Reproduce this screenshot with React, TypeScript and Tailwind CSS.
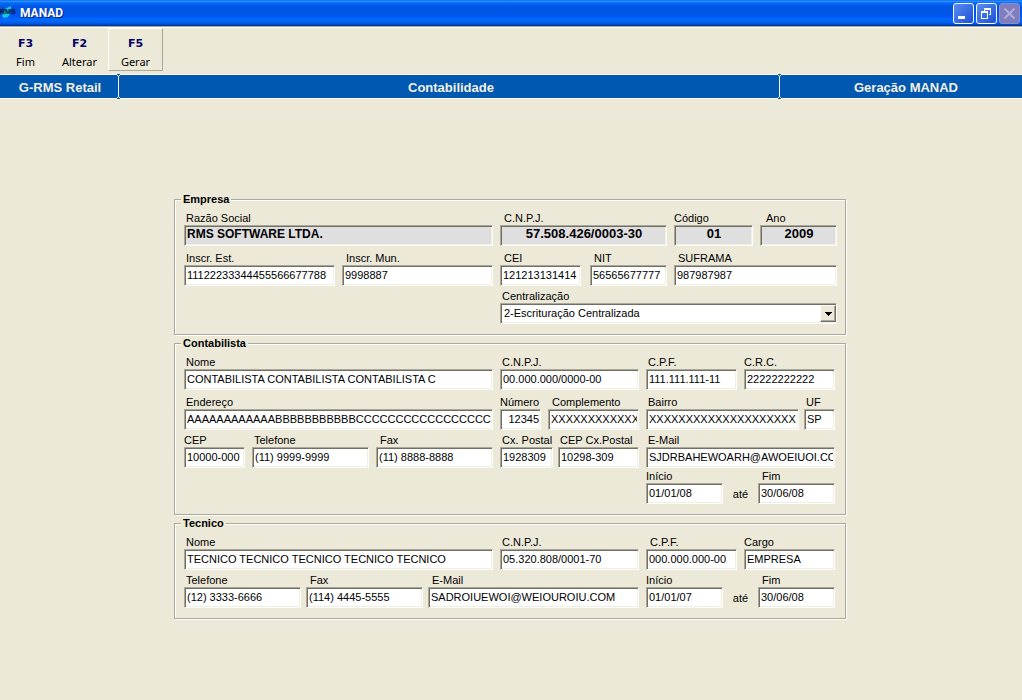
import { useId } from 'react'
import type { ReactNode } from 'react'

interface FieldProps {
    label: string
    value: string
    className: string
    labelClass?: string
    inputClass?: string
    locked?: boolean
}

const SUNKEN = 'border border-t-[#aca899] border-l-[#aca899] border-r-white border-b-white shadow-[inset_1px_1px_0_#716f64,inset_-1px_-1px_0_#f1efe2]'

function Field({ label, value, className, labelClass = 'pl-0.5', inputClass = 'text-[11px]', locked }: FieldProps) {
    const id = useId()
    return (
        <div className={`flex min-w-0 flex-col ${className}`}>
            <label htmlFor={id} className={`h-3.5 whitespace-nowrap text-[11px] leading-[14px] ${labelClass}`}>
                {label}
            </label>
            <input
                id={id}
                type="text"
                defaultValue={value}
                readOnly={locked}
                className={`h-[21px] w-full min-w-0 pr-px pl-0.5 outline-none ${SUNKEN} ${locked ? 'bg-[#e0dfe0] pb-1 font-bold' : 'bg-white pb-0.5'} ${inputClass}`}
            />
        </div>
    )
}

function Group({ title, className, children }: { title: string; className: string; children: ReactNode }) {
    return (
        <fieldset className={`min-w-0 border border-[#aca899] pb-[10px] pl-[9px] shadow-[inset_1px_1px_0_#fff,1px_1px_0_#fff] ${className}`}>
            <legend className="-ml-[3px] bg-[#ece9d8] px-0.5 text-[11px] leading-[14px] font-bold">{title}</legend>
            <div className="flex flex-col pt-[5px]">{children}</div>
        </fieldset>
    )
}

function Period({ start, end }: { start: string; end: string }) {
    return (
        <div className="flex min-w-0 flex-[189]">
            <Field label="Início" value={start} className="flex-[77]" labelClass="pl-0" />
            <span className="flex-[35] self-end pb-[3px] text-center text-[11px] leading-[14px]">até</span>
            <Field label="Fim" value={end} className="flex-[77]" labelClass="pl-1" />
        </div>
    )
}

function ToolButton({ keyName, label, className }: { keyName: string; label: string; className: string }) {
    return (
        <button type="button" className={`flex h-[43px] flex-col items-center border pt-2 ${className}`}>
            <span className="font-['DejaVu_Sans',sans-serif] text-[11px] leading-[14px] font-bold text-[#000066]">{keyName}</span>
            <span className="pt-[4px] font-['Noto_Sans',sans-serif] text-[11px] leading-[14px]">{label}</span>
        </button>
    )
}

function Divider() {
    return (
        <svg width="3" height="25" viewBox="0 0 3 25" shapeRendering="crispEdges" className="-mx-px -my-px shrink-0" aria-hidden="true">
            <path d="M0 0h3v25H0z" fill="#0058b0" />
            <path d="M0 1h1v1H0zM2 1h1v1H2zM1 2h1v21H1zM0 23h1v1H0zM2 23h1v1H2z" fill="#fff" />
        </svg>
    )
}

function TitleBar() {
    const frame = 'flex size-[21px] items-center justify-center rounded-[3px] border'
    return (
        <header className="flex h-[26px] items-center bg-[linear-gradient(180deg,#0058ee_0%,#3593ff_4%,#288eff_6%,#036ffc_10%,#0057e5_24%,#0054e3_40%,#0055eb_56%,#005bf5_66%,#026afe_76%,#0062ef_86%,#0052d6_92%,#0040ab_96%,#003092_100%)]">
            <svg width="16" height="16" viewBox="0 0 16 16" className="shrink-0" aria-hidden="true">
                <path d="M11 1L6 3 4 7l-2 4 2 2 4-1 2-3-1-3 2-2z" fill="#14c8e0" />
                <text x="0" y="9" fontSize="7" fontWeight="700" fill="#02122e">RMS</text>
            </svg>
            <h1 className="flex-1 pl-1 font-['Roboto',sans-serif] text-[12px] font-bold text-white [text-shadow:1px_1px_0_#00247a]">MANAD</h1>
            <div className="flex gap-0.5 pr-0.5">
                <button type="button" aria-label="Minimizar" className={`${frame} border-white bg-linear-to-br from-[#5a8cf0] to-[#1c4fd8]`}>
                    <svg width="19" height="19" viewBox="0 0 19 19" shapeRendering="crispEdges"><path d="M4 12h7v3H4z" fill="#fff" /></svg>
                </button>
                <button type="button" aria-label="Restaurar" className={`${frame} border-white bg-linear-to-br from-[#5a8cf0] to-[#1c4fd8]`}>
                    <svg width="19" height="19" viewBox="0 0 19 19" shapeRendering="crispEdges">
                        <path d="M7 4h7v7h-2v-1h1V6H8v1H7zM4 7h7v8H4zM5 9v5h5V9z" fill="#fff" fillRule="evenodd" />
                    </svg>
                </button>
                <button type="button" aria-label="Fechar" disabled className={`${frame} border-[#8c8ad0] bg-[#7f7dbb]`}>
                    <svg width="19" height="19" viewBox="0 0 19 19"><path d="M4.500 4.500l10 10M14.500 4.500l-10 10" stroke="#b0aedd" strokeWidth="2" /></svg>
                </button>
            </div>
        </header>
    )
}

export default function App() {
    const centralId = useId()
    return (
        <div className="min-h-screen bg-[#ece9d8] font-['Liberation_Sans',Arial,sans-serif] text-black">
            <TitleBar />
            <div className="flex h-12 border-t border-[#aca899] pt-px shadow-[inset_0_1px_0_#fff]">
                <ToolButton keyName="F3" label="Fim" className="w-[51px] border-transparent" />
                <ToolButton keyName="F2" label="Alterar" className="w-[57px] border-transparent" />
                <ToolButton keyName="F5" label="Gerar" className="w-[55px] border-t-white border-l-white border-r-[#aca899] border-b-[#aca899]" />
            </div>
            <div className="flex h-[25px] border-y border-white bg-[#0058b0] text-center text-[13px] leading-[25px] font-bold text-[#f4f0e0]">
                <div className="w-[118px] shrink-0 pl-0.5">G-RMS Retail</div>
                <Divider />
                <div className="flex-1 pl-1">Contabilidade</div>
                <Divider />
                <div className="w-[242px] shrink-0 pl-2.5">Geração MANAD</div>
            </div>

            <main className="pt-[93px] pr-0.5">
                <form className="mx-auto flex w-full max-w-[672px] flex-col gap-px">
                    <Group title="Empresa" className="pr-2">
                        <div className="flex gap-[7px]">
                            <Field label="Razão Social" value="RMS SOFTWARE LTDA." className="flex-[309]" inputClass="text-[12px]" locked />
                            <Field label="C.N.P.J." value="57.508.426/0003-30" className="flex-[167]" labelClass="pl-1" inputClass="text-center text-[13px]" locked />
                            <Field label="Código" value="01" className="flex-[79]" labelClass="pl-0" inputClass="text-center text-[13px]" locked />
                            <Field label="Ano" value="2009" className="flex-[77]" labelClass="pl-1.5" inputClass="text-center text-[13px]" locked />
                        </div>
                        <div className="flex gap-[7px] pt-[5px]">
                            <Field label="Inscr. Est." value="11122233344455566677788" className="flex-[151]" />
                            <Field label="Inscr. Mun." value="9998887" className="flex-[151]" labelClass="pl-1" />
                            <div className="flex min-w-0 flex-[167] gap-[9px]">
                                <Field label="CEI" value="121213131414" className="flex-[81]" labelClass="pl-1" />
                                <Field label="NIT" value="56565677777" className="flex-[77]" labelClass="pl-1" />
                            </div>
                            <Field label="SUFRAMA" value="987987987" className="flex-[163]" labelClass="pl-1" />
                        </div>
                        <div className="flex gap-[7px] pt-[3px]">
                            <div className="flex-[309]" />
                            <div className="flex min-w-0 flex-[337] flex-col">
                                <label htmlFor={centralId} className="h-3.5 pl-0.5 text-[11px] leading-[14px]">Centralização</label>
                                <div className="relative">
                                    <select id={centralId} className={`block h-[21px] w-full appearance-none bg-white px-[3px] text-[11px] outline-none ${SUNKEN}`}>
                                        <option>2-Escrituração Centralizada</option>
                                    </select>
                                    <span className="pointer-events-none absolute top-0.5 right-px flex h-[17px] w-4 items-center justify-center border border-t-white border-l-white border-r-[#716f64] border-b-[#716f64] bg-[#ece9d8] shadow-[inset_-1px_-1px_0_#aca899]">
                                        <svg width="7" height="4" viewBox="0 0 7 4" shapeRendering="crispEdges"><path d="M0 0h7v1H0zM1 1h5v1H1zM2 2h3v1H2zM3 3h1v1H3z" /></svg>
                                    </span>
                                </div>
                            </div>
                        </div>
                    </Group>

                    <Group title="Contabilista" className="pr-[10px]">
                        <div className="flex gap-[7px]">
                            <Field label="Nome" value="CONTABILISTA CONTABILISTA CONTABILISTA C" className="flex-[309]" />
                            <Field label="C.N.P.J." value="00.000.000/0000-00" className="flex-[139]" />
                            <Field label="C.P.F." value="111.111.111-11" className="flex-[91]" />
                            <Field label="C.R.C." value="22222222222" className="flex-[91]" labelClass="pl-0" />
                        </div>
                        <div className="flex gap-[7px] pt-[5px]">
                            <Field label="Endereço" value="AAAAAAAAAAAABBBBBBBBBBBCCCCCCCCCCCCCCCCC" className="flex-[309]" />
                            <Field label="Número" value="12345" className="flex-[41]" labelClass="pl-0" inputClass="text-right text-[11px]" />
                            <Field label="Complemento" value="XXXXXXXXXXXX" className="flex-[91]" labelClass="pl-1" />
                            <div className="flex min-w-0 flex-[189] gap-[5px]">
                                <Field label="Bairro" value="XXXXXXXXXXXXXXXXXXXX" className="flex-[153]" />
                                <Field label="UF" value="SP" className="flex-[31]" />
                            </div>
                        </div>
                        <div className="flex gap-[7px] pt-[3px]">
                            <Field label="CEP" value="10000-000" className="flex-[61]" labelClass="pl-0" />
                            <Field label="Telefone" value="(11) 9999-9999" className="flex-[117]" />
                            <Field label="Fax" value="(11) 8888-8888" className="flex-[117]" labelClass="pl-1" />
                            <div className="flex min-w-0 flex-[139] gap-[5px]">
                                <Field label="Cx. Postal" value="1928309" className="flex-[53]" />
                                <Field label="CEP Cx.Postal" value="10298-309" className="flex-[81]" />
                            </div>
                            <Field label="E-Mail" value="SJDRBAHEWOARH@AWOEIUOI.CO" className="flex-[189]" />
                        </div>
                        <div className="flex gap-[7px] pt-px">
                            <div className="flex-[309]" />
                            <div className="flex-[139]" />
                            <Period start="01/01/08" end="30/06/08" />
                        </div>
                    </Group>

                    <Group title="Tecnico" className="pr-[10px]">
                        <div className="flex gap-[7px]">
                            <Field label="Nome" value="TECNICO TECNICO TECNICO TECNICO TECNICO" className="flex-[309]" />
                            <Field label="C.N.P.J." value="05.320.808/0001-70" className="flex-[139]" />
                            <Field label="C.P.F." value="000.000.000-00" className="flex-[91]" labelClass="pl-1" />
                            <Field label="Cargo" value="EMPRESA" className="flex-[91]" labelClass="pl-0" />
                        </div>
                        <div className="flex gap-[7px] pt-[3px]">
                            <div className="flex min-w-0 flex-[455] gap-[5px]">
                                <Field label="Telefone" value="(12) 3333-6666" className="flex-[117]" />
                                <Field label="Fax" value="(114) 4445-5555" className="flex-[117]" labelClass="pl-1" />
                                <Field label="E-Mail" value="SADROIUEWOI@WEIOUROIU.COM" className="flex-[211]" labelClass="pl-1" />
                            </div>
                            <Period start="01/01/07" end="30/06/08" />
                        </div>
                    </Group>
                </form>
            </main>
        </div>
    )
}
